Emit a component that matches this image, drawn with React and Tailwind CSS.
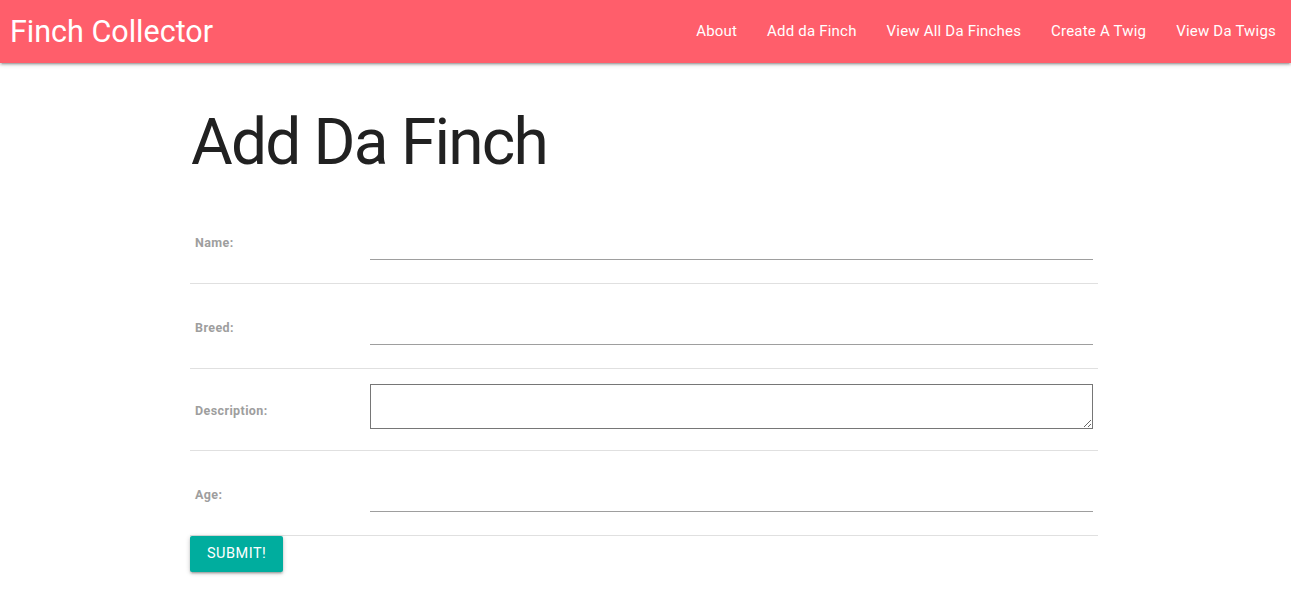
export default function App() {
  const font = { fontFamily: 'Roboto, "Noto Sans", sans-serif' };
  const links = ["About", "Add da Finch", "View All Da Finches", "Create A Twig", "View Da Twigs"];
  const Row = ({ label, children }) => (
    <tr className="border-b border-[#e0e0e0]">
      <td className="w-[175px] px-[5px] pt-[19px] pb-[15px] align-middle text-[12.5px] tracking-[0.4px] font-bold text-[#9e9e9e]">{label}</td>
      <td className="px-[5px] py-[15px] align-middle">{children}</td>
    </tr>
  );
  const Input = () => (
    <input className="block h-[46px] w-full border-b border-[#9e9e9e] bg-transparent mb-[8px] outline-none" />
  );
  return (
    <div className="min-h-[614px] bg-white" style={font}>
      <nav className="flex h-[63px] items-center justify-between bg-[#ff5e6b] shadow-[0_2px_2px_0_rgba(0,0,0,0.14),0_3px_1px_-2px_rgba(0,0,0,0.12),0_1px_5px_0_rgba(0,0,0,0.2)]">
        <div className="pl-[10px] text-[30.5px] leading-[63px] text-white">Finch Collector</div>
        <ul className="flex">
          {links.map((l) => (
            <li key={l} className="px-[15px] text-[15px] tracking-[0.2px] leading-[63px] text-white">{l}</li>
          ))}
        </ul>
      </nav>
      <main className="ml-[190px] w-[908px]">
        <h1 className="ml-[1px] mt-[45px] mb-[21px] text-[64px] leading-[70px] tracking-[-1.8px] text-[#212121]">Add Da Finch</h1>
        <form>
          <table className="w-full border-collapse">
            <tbody>
              <Row label="Name:"><Input /></Row>
              <Row label="Breed:"><Input /></Row>
              <Row label="Description:">
                <textarea className="block h-[45px] w-full resize-y border border-[#767676] mb-[6px] outline-none" />
              </Row>
              <Row label="Age:"><Input /></Row>
            </tbody>
          </table>
          <button
            type="button"
            className="h-[36px] rounded-[2px] bg-[#00ad9e] px-[17px] text-[14.5px] tracking-[0.5px] text-white shadow-[0_2px_2px_0_rgba(0,0,0,0.14),0_3px_1px_-2px_rgba(0,0,0,0.12),0_1px_5px_0_rgba(0,0,0,0.2)]"
          >
            SUBMIT!
          </button>
        </form>
      </main>
    </div>
  );
}
